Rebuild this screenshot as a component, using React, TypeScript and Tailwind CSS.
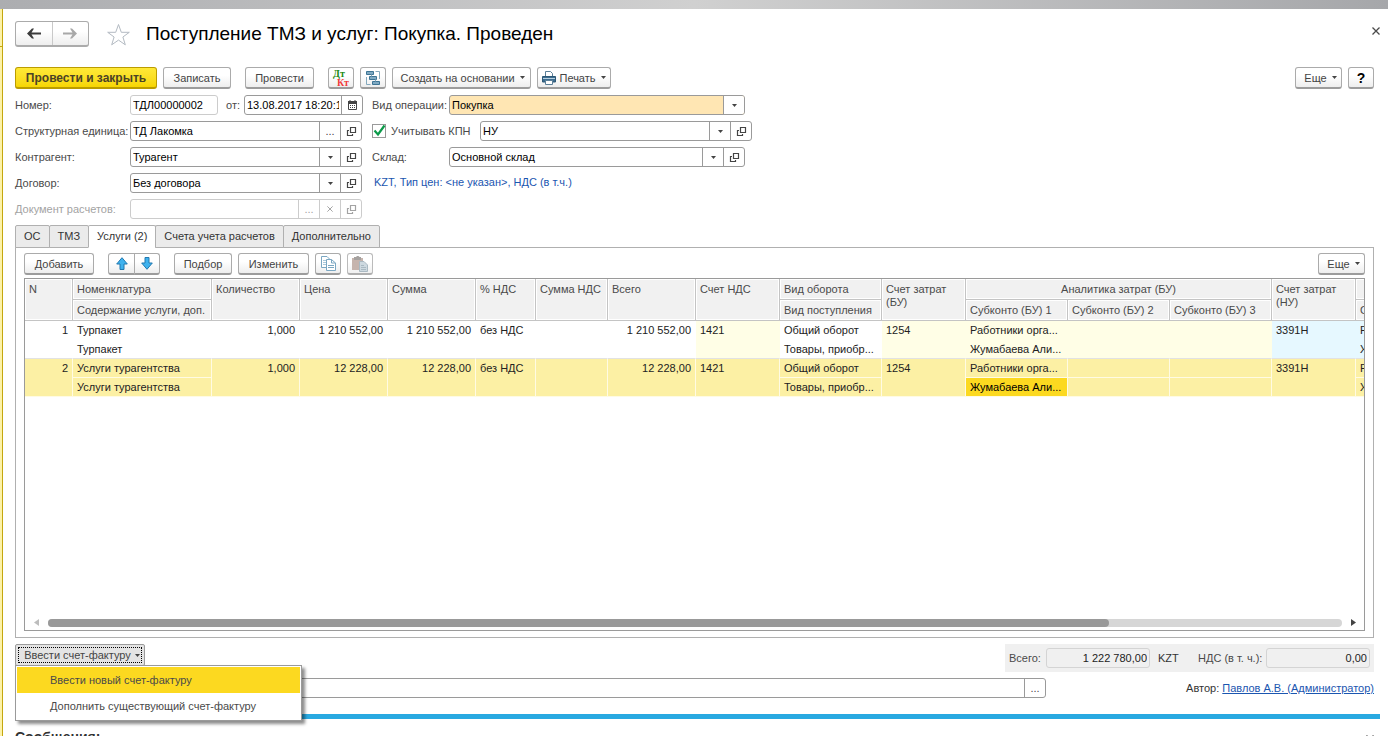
import React, { useState } from "react";
import clsx from "clsx";

const BTN = "h-[22px] shrink-0 flex items-center justify-center rounded-[3px] border border-[#ababab] border-b-2 border-b-[#9c9c9c] bg-linear-to-b from-white from-40% to-[#eeeeee] text-[#444444] whitespace-nowrap";
const FIELD = "h-5 flex rounded-[3px] border overflow-hidden";
const INPUT = "flex-1 min-w-0 w-0 appearance-none bg-transparent px-0.5 outline-none text-black";
const FIELD_BTN = "w-[21px] last:w-5 shrink-0 flex items-center justify-center";

const Caret = ({ className = "text-[#444444]" }: { className?: string }) => (
    <svg width="5" height="3" viewBox="0 0 5 3" className={clsx("shrink-0", className)} aria-hidden="true">
        <path d="M0 0H5L2.5 3Z" fill="currentColor" />
    </svg>
);

const OpenIcon = () => (
    <svg width="11" height="11" viewBox="0 0 11 11" fill="none" stroke="currentColor" strokeWidth="1.2" aria-hidden="true">
        <path d="M4.5 1.5H9.5V6.5H4.5Z" />
        <path d="M3 4.5H1.5V9.5H6.5V8" />
    </svg>
);

const CloseIcon = ({ size = 8 }: { size?: number }) => (
    <svg width={size} height={size} viewBox="0 0 8 8" stroke="currentColor" strokeWidth="1.3" aria-hidden="true">
        <path d="M0.5 0.5L7.5 7.5M7.5 0.5L0.5 7.5" />
    </svg>
);

const CalendarIcon = () => (
    <svg width="9" height="10" viewBox="0 0 9 10" aria-hidden="true">
        <path d="M0.5 1.5H8.5V9.5H0.5Z" fill="none" stroke="#444" />
        <path d="M0 1H9V4H0Z" fill="#444" />
        <path d="M2 0V2M7 0V2" stroke="#444" />
        <path d="M2 5.5H7M2 7.5H7" stroke="#444" strokeDasharray="1 1" />
    </svg>
);

const NavArrow = ({ back }: { back?: boolean }) => (
    <svg width="14" height="11" viewBox="0 0 14 11" fill={back ? "#3c3c3c" : "#a8a8a8"} aria-hidden="true">
        {back
            ? <path d="M14 4.5V6.5H4.5L7 10.5H5L0 5.5L5 0.5H7L4.5 4.5Z" />
            : <path d="M0 4.5V6.5H9.5L7 10.5H9L14 5.5L9 0.5H7L9.5 4.5Z" />}
    </svg>
);

const MoveArrow = ({ down }: { down?: boolean }) => (
    <svg width="12" height="13" viewBox="0 0 12 13" fill="#3fb2ee" stroke="#2179b0" strokeLinejoin="round" aria-hidden="true">
        {down ? <path d="M4 0.5H8V6H11.3L6 12.3L0.7 6H4Z" /> : <path d="M4 12.5H8V7H11.3L6 0.7L0.7 7H4Z" />}
    </svg>
);

const DtKtIcon = () => (
    <svg width="18" height="18" viewBox="0 0 18 18" fontFamily="Liberation Serif, serif" fontWeight="bold" fontSize="10" aria-hidden="true">
        <text x="1" y="8" fill="#1c8a12">Дт</text>
        <text x="5" y="17" fill="#f03a3a">Кт</text>
    </svg>
);

const StructureIcon = () => (
    <svg width="16" height="16" viewBox="0 0 16 16" fill="#7fa9c2" stroke="#3e7595" aria-hidden="true">
        <path d="M1.5 1.5H8.5V4.5H1.5Z" />
        <path d="M4.5 6.5H11.5V9.5H4.5Z" />
        <path d="M7.5 11.5H14.5V14.5H7.5Z" />
        <path d="M10.5 1.5H14.5V9M1.5 7V14.5H5.5M6.5 4.5V6.5M10.5 9.5V11.5" fill="none" stroke="#84a9bd" />
    </svg>
);

const PrinterIcon = () => (
    <svg width="14" height="14" viewBox="0 0 14 14" aria-hidden="true">
        <path d="M3.5 6V0.5H8.5L10.5 2.5V6" fill="#fff" stroke="#5b7f98" />
        <path d="M0.5 5.5H13.5V11H0.5Z" fill="#3d6d90" stroke="#2d5876" />
        <path d="M1 7.5H13" stroke="#b7d0e0" />
        <path d="M3.5 9.5H10.5V13.5H3.5Z" fill="#fff" stroke="#5b7f98" />
    </svg>
);

const CopyIcon = () => (
    <svg width="15" height="15" viewBox="0 0 15 15" fill="#fff" stroke="#7ba7c2" aria-hidden="true">
        <path d="M0.5 0.5H6L9.5 4V11.5H0.5Z" />
        <path d="M2 4.5H5M2 6.5H5M2 8.5H5" stroke="#a9c8da" />
        <path d="M5.5 3.5H10.5L14.5 7V14.5H5.5Z" />
        <path d="M10.5 3.5V7H14.5M7 9.5H13M7 11.5H13" fill="none" />
    </svg>
);

const PasteIcon = () => (
    <svg width="16" height="16" viewBox="0 0 16 16" aria-hidden="true">
        <path d="M0 2H11V14H0Z" fill="#b8a299" />
        <path d="M2 1H4L5 0H6.5L7.5 1H9V4H2Z" fill="#8f8a88" />
        <path d="M7.5 5.5H12L15.5 9V15.5H7.5Z" fill="#c3d0d9" stroke="#96a8b4" />
        <path d="M9 9.5H12M9 11.5H14M9 13.5H14" stroke="#96a8b4" />
    </svg>
);

interface FieldProps {
    id: string;
    value: string;
    kind: "select" | "dots";
    open?: boolean;
    highlight?: boolean;
    className: string;
}

const Field = ({ id, value, kind, open = true, highlight = false, className }: FieldProps) => (
    <div className={clsx(FIELD, "border-[#9a9a9a] divide-x divide-[#9a9a9a]", highlight ? "bg-[#ffe6b3]" : "bg-white", className)}>
        {kind === "select" ? (
            <>
                <select id={id} className={INPUT}>
                    <option>{value}</option>
                </select>
                <span className={clsx(FIELD_BTN, "bg-white")}><Caret /></span>
            </>
        ) : (
            <>
                <input id={id} defaultValue={value} className={INPUT} />
                <button aria-label="Выбрать" className={clsx(FIELD_BTN, "text-[#444444]")}>...</button>
            </>
        )}
        {open && (
            <button aria-label="Открыть" className={clsx(FIELD_BTN, "text-[#444444]")}><OpenIcon /></button>
        )}
    </div>
);

const LABEL = "w-[115px] shrink-0 whitespace-nowrap";
const TABS = ["ОС", "ТМЗ", "Услуги (2)", "Счета учета расчетов", "Дополнительно"];
const COLS = [48, 139, 88, 88, 88, 60, 72, 88, 84, 102, 84, 102, 102, 102, 84, 102];

const ROWS = [
    { n: 1, name: "Турпакет", price: "1 210 552,00" },
    { n: 2, name: "Услуги турагентства", price: "12 228,00" },
];

const Head = ({ children, center = false, className, ...rest }: React.ThHTMLAttributes<HTMLTableCellElement> & { center?: boolean }) => (
    <th
        className={clsx(
            "border-r border-b border-[#c4c4c4] bg-[#f1f1f1] px-1 pt-1 align-top font-normal leading-[13px] text-[#4a4a4a] inset-shadow-[0_0_0_1px_#ffffff]",
            center ? "text-center" : "text-left",
            className
        )}
        {...rest}
    >
        {children}
    </th>
);

const CELL = "h-[19px] overflow-hidden border-r px-1 whitespace-nowrap align-top leading-[18px]";

const ItemRows = ({ row, selected }: { row: (typeof ROWS)[number]; selected: boolean }) => {
    const base = clsx(CELL, selected ? "border-b border-[#fffbe3] bg-[#fcf0a4]" : "border-r-transparent");
    const last = selected ? "" : "border-b border-b-[#e2e2e2]";
    const pale = selected ? "" : "bg-[#fffee6]";
    const blue = selected ? "" : "bg-[#e6f8ff]";
    return (
        <>
            <tr>
                <td rowSpan={2} className={clsx(base, last, "text-right")}>{row.n}</td>
                <td className={base}>{row.name}</td>
                <td rowSpan={2} className={clsx(base, last, "text-right")}>1,000</td>
                <td rowSpan={2} className={clsx(base, last, "text-right")}>{row.price}</td>
                <td rowSpan={2} className={clsx(base, last, "text-right")}>{row.price}</td>
                <td rowSpan={2} className={clsx(base, last)}>без НДС</td>
                <td rowSpan={2} className={clsx(base, last)} />
                <td rowSpan={2} className={clsx(base, last, "text-right")}>{row.price}</td>
                <td rowSpan={2} className={clsx(base, last, pale)}>1421</td>
                <td className={base}>Общий оборот</td>
                <td rowSpan={2} className={clsx(base, last, pale)}>1254</td>
                <td className={clsx(base, pale)}>Работники орга...</td>
                <td className={clsx(base, pale)} />
                <td className={clsx(base, pale)} />
                <td rowSpan={2} className={clsx(base, last, blue)}>3391Н</td>
                <td className={clsx(base, blue)}>Работники орга...</td>
            </tr>
            <tr>
                <td className={clsx(base, last)}>{row.name}</td>
                <td className={clsx(base, last)}>Товары, приобр...</td>
                <td className={clsx(CELL, "border-b", selected ? "border-[#fffbe3] bg-[#fcd920] text-black" : "border-r-transparent border-b-[#e2e2e2] bg-[#fffee6]")}>Жумабаева Али...</td>
                <td className={clsx(base, last, pale)} />
                <td className={clsx(base, last, pale)} />
                <td className={clsx(base, last, blue)}>Жумабаева Али...</td>
            </tr>
        </>
    );
};

const ItemsTable = () => (
    <div className="flex-1 min-h-0 flex flex-col overflow-hidden border border-[#9a9a9a] mt-[3px]">
        <div className="flex-1 min-h-0 overflow-hidden">
            <table className="table-fixed border-separate border-spacing-0 w-[1433px]">
                <colgroup>
                    {COLS.map((w, i) => <col key={i} style={{ width: w }} />)}
                </colgroup>
                <thead>
                    <tr className="h-[21px]">
                        <Head rowSpan={2}>N</Head>
                        <Head>Номенклатура</Head>
                        <Head rowSpan={2}>Количество</Head>
                        <Head rowSpan={2}>Цена</Head>
                        <Head rowSpan={2}>Сумма</Head>
                        <Head rowSpan={2}>% НДС</Head>
                        <Head rowSpan={2} className="whitespace-nowrap">Сумма НДС</Head>
                        <Head rowSpan={2}>Всего</Head>
                        <Head rowSpan={2}>Счет НДС</Head>
                        <Head>Вид оборота</Head>
                        <Head rowSpan={2}>Счет затрат (БУ)</Head>
                        <Head colSpan={3} center>Аналитика затрат (БУ)</Head>
                        <Head rowSpan={2}>Счет затрат (НУ)</Head>
                        <Head />
                    </tr>
                    <tr className="h-[21px]">
                        <Head className="whitespace-nowrap">Содержание услуги, доп.</Head>
                        <Head className="whitespace-nowrap">Вид поступления</Head>
                        <Head className="whitespace-nowrap">Субконто (БУ) 1</Head>
                        <Head className="whitespace-nowrap">Субконто (БУ) 2</Head>
                        <Head className="whitespace-nowrap">Субконто (БУ) 3</Head>
                        <Head className="whitespace-nowrap">Субконто (НУ) 1</Head>
                    </tr>
                </thead>
                <tbody className="text-[#222222]">
                    {ROWS.map((row) => <ItemRows key={row.n} row={row} selected={row.n === 2} />)}
                </tbody>
            </table>
        </div>

        {/* Horizontal scroll */}
        <div className="h-[15px] shrink-0 flex items-center pl-[9px] pr-2">
            <svg width="5" height="7" viewBox="0 0 5 7" aria-hidden="true"><path d="M5 0V7L0 3.5Z" fill="#bdbdbd" /></svg>
            <div className="flex-1 h-2 mx-[9px] rounded-full bg-[#d6d6d6]">
                <div className="h-2 w-[82%] rounded-full bg-[#999999]" />
            </div>
            <svg width="5" height="7" viewBox="0 0 5 7" aria-hidden="true"><path d="M0 0V7L5 3.5Z" fill="#444" /></svg>
        </div>
    </div>
);

export default function App() {
    const [menuOpen, setMenuOpen] = useState(true);

    return (
        <div className="h-screen flex flex-col overflow-hidden bg-white text-[11px] leading-[14px] text-[#4a4a4a] font-['Liberation_Sans',Arial,sans-serif]">
            <div className="h-[9px] shrink-0 bg-linear-to-r from-[#acadb0] via-[#d0d0d0] to-[#a6a7aa]" />
            <div className="flex-1 min-h-0 flex">
                <div className="w-[3px] shrink-0 border-r border-[#c4a70e] bg-[#fdf2a8]">
                    <div className="h-[38px] border-b border-[#c4a70e]" />
                </div>

                <main className="flex-1 min-w-0 flex flex-col">
                    {/* Title */}
                    <header className="flex items-start pt-3 pl-3 pr-2">
                        <div className="w-[74px] h-[26px] shrink-0 flex rounded-[3px] border border-[#ababab] border-b-2 bg-linear-to-b from-white from-40% to-[#eeeeee] divide-x divide-[#c9c9c9]">
                            <button aria-label="Назад" className="flex-1 flex items-center justify-center"><NavArrow back /></button>
                            <button aria-label="Вперед" className="flex-1 flex items-center justify-center"><NavArrow /></button>
                        </div>
                        <button aria-label="В избранное" className="ml-[17px] mt-0.5">
                            <svg width="25" height="24" viewBox="0 0 25 24" fill="none" stroke="#b3bac2" aria-hidden="true">
                                <path d="M12.5 1.5L15.3 9.3H23.3L16.9 14L19.3 21.8L12.5 17.1L5.7 21.8L8.1 14L1.7 9.3H9.7Z" />
                            </svg>
                        </button>
                        <h1 className="flex-1 ml-[15px] text-[19px] leading-[26px] text-black whitespace-nowrap">Поступление ТМЗ и услуг: Покупка. Проведен</h1>
                        <button aria-label="Закрыть" className="mt-1.5"><CloseIcon /></button>
                    </header>

                    {/* Commands */}
                    <div className="flex items-center gap-1.5 mt-5 pl-3 pr-3.5">
                        <button className="w-[142px] h-[22px] shrink-0 rounded-[3px] border border-[#bb9c00] border-b-2 bg-linear-to-b from-[#ffe936] to-[#f7d600] font-bold text-xs leading-[18px] text-[#4a4226]">Провести и закрыть</button>
                        <button className={clsx(BTN, "w-[68px]")}>Записать</button>
                        <button className={clsx(BTN, "w-[69px] ml-2")}>Провести</button>
                        <button aria-label="Дт Кт" className={clsx(BTN, "w-[26px] ml-2")}><DtKtIcon /></button>
                        <button aria-label="Структура подчиненности" className={clsx(BTN, "w-[26px]")}><StructureIcon /></button>
                        <button className={clsx(BTN, "w-[139px] gap-[5px] pl-0.5")}>Создать на основании <Caret /></button>
                        <button className={clsx(BTN, "w-[74px] gap-[5px]")}><span className="flex items-center gap-[3px]"><PrinterIcon />Печать</span><Caret /></button>
                        <button className={clsx(BTN, "w-[47px] gap-[5px] ml-auto pl-1")}>Еще <Caret /></button>
                        <button className={clsx(BTN, "w-[26px]")}><span className="text-sm font-bold text-black">?</span></button>
                    </div>

                    {/* Document details */}
                    <div className="flex gap-[9px] mt-1.5 pl-3">
                        <div className="w-[348px] shrink-0 flex flex-col gap-1.5">
                            <div className="flex items-center">
                                <label htmlFor="number" className={LABEL}>Номер:</label>
                                <div className={clsx(FIELD, "w-[88px] border-[#cccccc]")}>
                                    <input id="number" readOnly defaultValue="ТДЛ00000002" className={INPUT} />
                                </div>
                                <label htmlFor="date" className="w-[26px] pl-2">от:</label>
                                <div className={clsx(FIELD, "flex-1 border-[#9a9a9a] divide-x divide-[#9a9a9a]")}>
                                    <input id="date" defaultValue="13.08.2017 18:20:1" className={INPUT} />
                                    <button aria-label="Календарь" className={FIELD_BTN}><CalendarIcon /></button>
                                </div>
                            </div>
                            <div className="flex items-center">
                                <label htmlFor="unit" className={LABEL}>Структурная единица:</label>
                                <Field id="unit" value="ТД Лакомка" kind="dots" className="w-[232px]" />
                            </div>
                            <div className="flex items-center">
                                <label htmlFor="partner" className={LABEL}>Контрагент:</label>
                                <Field id="partner" value="Турагент" kind="select" className="w-[232px]" />
                            </div>
                            <div className="flex items-center">
                                <label htmlFor="contract" className={LABEL}>Договор:</label>
                                <Field id="contract" value="Без договора" kind="select" className="w-[232px]" />
                            </div>
                            <div className="flex items-center text-[#a3a3a3]">
                                <label htmlFor="settlement" className={LABEL}>Документ расчетов:</label>
                                <div className={clsx(FIELD, "w-[232px] border-[#cccccc] divide-x divide-[#cccccc]")}>
                                    <input id="settlement" disabled className={INPUT} />
                                    <button disabled aria-label="Выбрать" className={FIELD_BTN}>...</button>
                                    <button disabled aria-label="Очистить" className={FIELD_BTN}><CloseIcon size={6} /></button>
                                    <button disabled aria-label="Открыть" className={FIELD_BTN}><OpenIcon /></button>
                                </div>
                            </div>
                        </div>

                        <div className="flex flex-col gap-1.5">
                            <div className="flex items-center">
                                <label htmlFor="operation" className="w-[77px] whitespace-nowrap">Вид операции:</label>
                                <Field id="operation" value="Покупка" kind="select" open={false} highlight className="w-[296px]" />
                            </div>
                            <div className="flex items-center">
                                <label htmlFor="accounting-on" className="w-[108px] flex items-center gap-[5px] whitespace-nowrap">
                                    <span className="relative size-3.5 shrink-0">
                                        <input id="accounting-on" type="checkbox" defaultChecked className="peer block size-3.5 appearance-none border border-[#9a9a9a] bg-white" />
                                        <svg width="14" height="14" viewBox="0 0 14 14" className="absolute inset-0 pointer-events-none hidden peer-checked:block" aria-hidden="true">
                                            <path d="M2.5 6.5L6 10.5L12.5 1.5" fill="none" stroke="#0b9a49" strokeWidth="2.2" />
                                        </svg>
                                    </span>
                                    Учитывать КПН
                                </label>
                                <Field id="accounting" value="НУ" kind="select" className="w-[272px]" />
                            </div>
                            <div className="flex items-center">
                                <label htmlFor="warehouse" className="w-[77px]">Склад:</label>
                                <Field id="warehouse" value="Основной склад" kind="select" className="w-[296px]" />
                            </div>
                            <a href="#prices" className="pl-0.5 leading-[18px] text-[#1b56b0]">KZT, Тип цен: &lt;не указан&gt;, НДС (в т.ч.)</a>
                        </div>
                    </div>

                    {/* Tabs */}
                    <div role="tablist" className="relative z-10 flex mt-1.5 ml-3 -mb-px">
                        {TABS.map((tab, i) => (
                            <button
                                key={tab}
                                role="tab"
                                aria-selected={i === 2}
                                className={clsx(
                                    "h-[23px] px-2 pb-0.5 border border-[#b0b0b0] text-[#333333] whitespace-nowrap rounded-t-[2px]",
                                    i > 0 && "-ml-px",
                                    i === 2 ? "bg-white border-b-white" : "bg-[#ebebeb]"
                                )}
                            >
                                {tab}
                            </button>
                        ))}
                    </div>

                    <section className="flex-1 min-h-0 flex flex-col ml-3 mr-3.5 px-2 pt-[5px] pb-1.5 border border-[#b0b0b0]">
                        <div className="flex">
                            <button className={clsx(BTN, "w-[70px]")}>Добавить</button>
                            <div className="flex ml-3.5">
                                <button aria-label="Вверх" className={clsx(BTN, "w-[27px] rounded-r-none")}><MoveArrow /></button>
                                <button aria-label="Вниз" className={clsx(BTN, "w-[26px] -ml-px rounded-l-none")}><MoveArrow down /></button>
                            </div>
                            <button className={clsx(BTN, "w-[58px] ml-3.5")}>Подбор</button>
                            <button className={clsx(BTN, "w-[71px] ml-1.5")}>Изменить</button>
                            <button aria-label="Копировать" className={clsx(BTN, "w-[26px] ml-1.5")}><CopyIcon /></button>
                            <button disabled aria-label="Вставить" className={clsx(BTN, "w-[26px] ml-1.5 opacity-80")}><PasteIcon /></button>
                            <button className={clsx(BTN, "w-[47px] gap-[5px] ml-auto pl-1")}>Еще <Caret /></button>
                        </div>
                        <ItemsTable />
                    </section>

                    {/* Invoice and totals */}
                    <div className="flex items-start justify-between mt-1.5 pl-3 pr-3.5">
                        <div className="relative z-20">
                            <button
                                aria-haspopup="menu"
                                aria-expanded={menuOpen}
                                onClick={() => setMenuOpen(!menuOpen)}
                                className="w-[130px] h-[22px] p-0.5 rounded-[2px] border border-[#9c9c9c] bg-[#e4e4e4] text-[#444444]"
                            >
                                <span className="h-full flex items-center justify-center gap-1 pl-1 border border-dotted border-black whitespace-nowrap">Ввести счет-фактуру <Caret /></span>
                            </button>
                            {menuOpen && (
                                <div role="menu" className="absolute left-0 top-[21px] w-[287px] p-px border border-[#9a9a9a] bg-white shadow-[3px_3px_3px_rgba(0,0,0,0.45)]">
                                    <button role="menuitem" className="block w-full h-[26px] pl-[33px] bg-[#fcd920] text-left">Ввести новый счет-фактуру</button>
                                    <button role="menuitem" className="block w-full h-[26px] pl-[33px] text-left">Дополнить существующий счет-фактуру</button>
                                </div>
                            )}
                        </div>
                        <div className="h-7 flex items-center bg-[#f0f0f0] px-1">
                            <label htmlFor="total" className="w-[37px]">Всего:</label>
                            <input id="total" readOnly defaultValue="1 222 780,00" className="w-[104px] h-5 px-0.5 rounded-[3px] border border-[#d4d4d4] text-right text-[#222222]" />
                            <span className="w-12 pl-2 text-[#333333]">KZT</span>
                            <label htmlFor="vat" className="w-[68px] whitespace-nowrap">НДС (в т. ч.):</label>
                            <input id="vat" readOnly defaultValue="0,00" className="w-[104px] h-5 px-0.5 rounded-[3px] border border-[#d4d4d4] text-right text-[#222222]" />
                        </div>
                    </div>

                    <div className="flex items-center mt-1.5 pl-3 pr-3.5">
                        <div className={clsx(FIELD, "flex-1 ml-[115px] border-[#9a9a9a] divide-x divide-[#9a9a9a]")}>
                            <input aria-label="Комментарий" className={INPUT} />
                            <button aria-label="Выбрать" className={FIELD_BTN}>...</button>
                        </div>
                        <div className="w-[328px] text-right text-[#333333]">
                            Автор: <a href="#author" className="text-[#1b56b0] underline">Павлов А.В. (Администратор)</a>
                        </div>
                    </div>

                    {/* Messages */}
                    <div className="h-[5px] shrink-0 mt-4 ml-3 mr-2 bg-[#29a9e1]" />
                    <div className="h-[17px] shrink-0 overflow-hidden flex items-start justify-between pt-[11px] pl-3 pr-3.5">
                        <h2 className="text-sm leading-[14px] font-bold text-[#333333]">Сообщения:</h2>
                        <button aria-label="Закрыть сообщения" className="mt-[5px]"><CloseIcon /></button>
                    </div>
                </main>
            </div>
        </div>
    );
}
